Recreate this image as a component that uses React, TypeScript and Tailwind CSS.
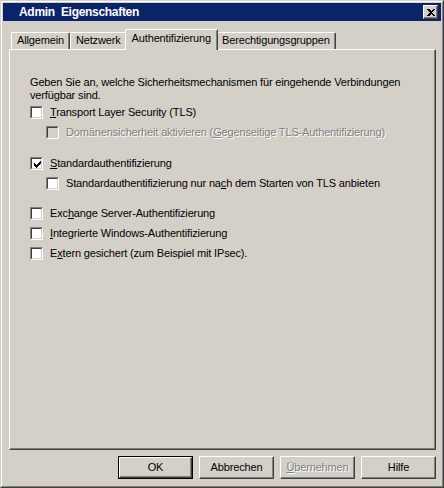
import type { ReactNode } from "react";

const font = "font-['Liberation_Sans',Arial,sans-serif]";

function CheckMark() {
  return (
    <svg width="7" height="7" viewBox="0 0 7 7" shapeRendering="crispEdges" className="absolute left-[3px] top-[3px]">
      <path d="M6 0h1v3h-1zM5 1h1v3h-1zM4 2h1v3h-1zM0 2h1v3h-1zM1 3h1v3h-1zM2 4h1v3h-1zM3 3h1v3h-1z" fill="#000" />
    </svg>
  );
}

function CheckBox({ checked, disabled }: { checked?: boolean; disabled?: boolean }) {
  return (
    <div className="relative w-[13px] h-[13px] shrink-0 border border-t-[#808080] border-l-[#808080] border-r-white border-b-white">
      <div
        className={`w-[11px] h-[11px] border border-t-[#404040] border-l-[#404040] border-r-[#d4d0c8] border-b-[#d4d0c8] ${
          disabled ? "bg-[#d4d0c8]" : "bg-white"
        }`}
      />
      {checked && <CheckMark />}
    </div>
  );
}

function Option({ children, checked, disabled, indent, className = "" }: {
  children: ReactNode;
  checked?: boolean;
  disabled?: boolean;
  indent?: boolean;
  className?: string;
}) {
  return (
    <div className={`flex items-center h-[20px] ${indent ? "pl-[16px]" : ""} ${className}`}>
      <CheckBox checked={checked} disabled={disabled} />
      <span
        className={`ml-[7px] whitespace-nowrap ${
          disabled ? "text-[#808080] [text-shadow:1px_1px_0_#fff]" : "text-black"
        }`}
      >
        {children}
      </span>
    </div>
  );
}

function Button({ children, isDefault, disabled }: { children: ReactNode; isDefault?: boolean; disabled?: boolean }) {
  return (
    <div className={`w-[75px] h-[23px] ${isDefault ? "border border-black" : ""}`}>
      <div className="w-full h-full border border-t-white border-l-white border-r-[#404040] border-b-[#404040] shadow-[inset_-1px_-1px_0_#808080] flex items-center justify-center">
        <span className={disabled ? "text-[#808080] [text-shadow:1px_1px_0_#fff]" : "text-black"}>{children}</span>
      </div>
    </div>
  );
}

function Tab({ label, active }: { label: string; active?: boolean }) {
  if (active) {
    return (
      <div className="relative z-10 -mx-[2px] h-[21px] -mb-px px-[6px] bg-[#d4d0c8] border-l border-t border-white border-r border-r-[#404040] shadow-[inset_-1px_0_0_#808080] rounded-t-[2px] flex items-start pt-[2px]">
        {label}
      </div>
    );
  }
  return (
    <div className="mt-[3px] h-[17px] px-[5px] border-l border-t border-white border-r border-r-[#404040] shadow-[inset_-1px_0_0_#808080] rounded-t-[2px] flex items-start pt-[1px]">
      {label}
    </div>
  );
}

export default function App() {
  return (
    <div className={`w-[444px] h-[488px] bg-[#d4d0c8] text-[11px] leading-[13px] tracking-[-0.15px] ${font} border border-t-[#d4d0c8] border-l-[#d4d0c8] border-r-[#404040] border-b-[#404040]`}>
      <div className="h-full border border-t-white border-l-white border-r-[#808080] border-b-[#808080] p-px flex flex-col">
        {/* title bar */}
        <div className="h-[18px] bg-[#0a246a] flex items-center pl-[16px] pr-[3px]">
          <span className="text-white font-bold text-[12px] tracking-[-0.3px] whitespace-pre">Admin  Eigenschaften</span>
          <div className="ml-auto w-[15px] h-[14px] bg-[#d4d0c8] border border-t-white border-l-white border-r-[#404040] border-b-[#404040] shadow-[inset_-1px_-1px_0_#808080] flex items-center justify-center">
            <svg width="8" height="7" viewBox="0 0 8 7" shapeRendering="crispEdges">
              <path d="M0 0h2l2 2 2-2h2l-3 3.5 3 3.5h-2l-2-2-2 2h-2l3-3.5z" fill="#000" />
            </svg>
          </div>
        </div>

        {/* tabs */}
        <div className="mt-[8px] ml-[8px] flex h-[20px] items-start text-black">
          <Tab label="Allgemein" />
          <Tab label="Netzwerk" />
          <Tab label="Authentifizierung" active />
          <Tab label="Berechtigungsgruppen" />
        </div>

        {/* panel */}
        <div className="ml-[6px] mr-[5px] h-[401px] border border-t-white border-l-white border-r-[#404040] border-b-[#404040] shadow-[inset_-1px_-1px_0_#808080] pl-[20px] pt-[26px] text-black">
          <p>
            Geben Sie an, welche Sicherheitsmechanismen für eingehende Verbindungen
            <br />
            verfügbar sind.
          </p>
          <Option>
            <u>T</u>ransport Layer Security (TLS)
          </Option>
          <Option indent disabled>
            Domänensicherheit aktivieren (<u>G</u>egenseitige TLS-Authentifizierung)
          </Option>
          <Option checked className="mt-[11px]">
            <u>S</u>tandardauthentifizierung
          </Option>
          <Option indent>
            Standardauthentifizierung nur na<u>c</u>h dem Starten von TLS anbieten
          </Option>
          <Option className="mt-[10px]">
            Exc<u>h</u>ange Server-Authentifizierung
          </Option>
          <Option>
            <u>I</u>ntegrierte Windows-Authentifizierung
          </Option>
          <Option>
            E<u>x</u>tern gesichert (zum Beispiel mit IPsec).
          </Option>
        </div>

        {/* buttons */}
        <div className="mt-[6px] mr-[5px] flex justify-end gap-[6px]">
          <Button isDefault>OK</Button>
          <Button>Abbrechen</Button>
          <Button disabled>
            <u>Ü</u>bernehmen
          </Button>
          <Button>Hilfe</Button>
        </div>
      </div>
    </div>
  );
}
